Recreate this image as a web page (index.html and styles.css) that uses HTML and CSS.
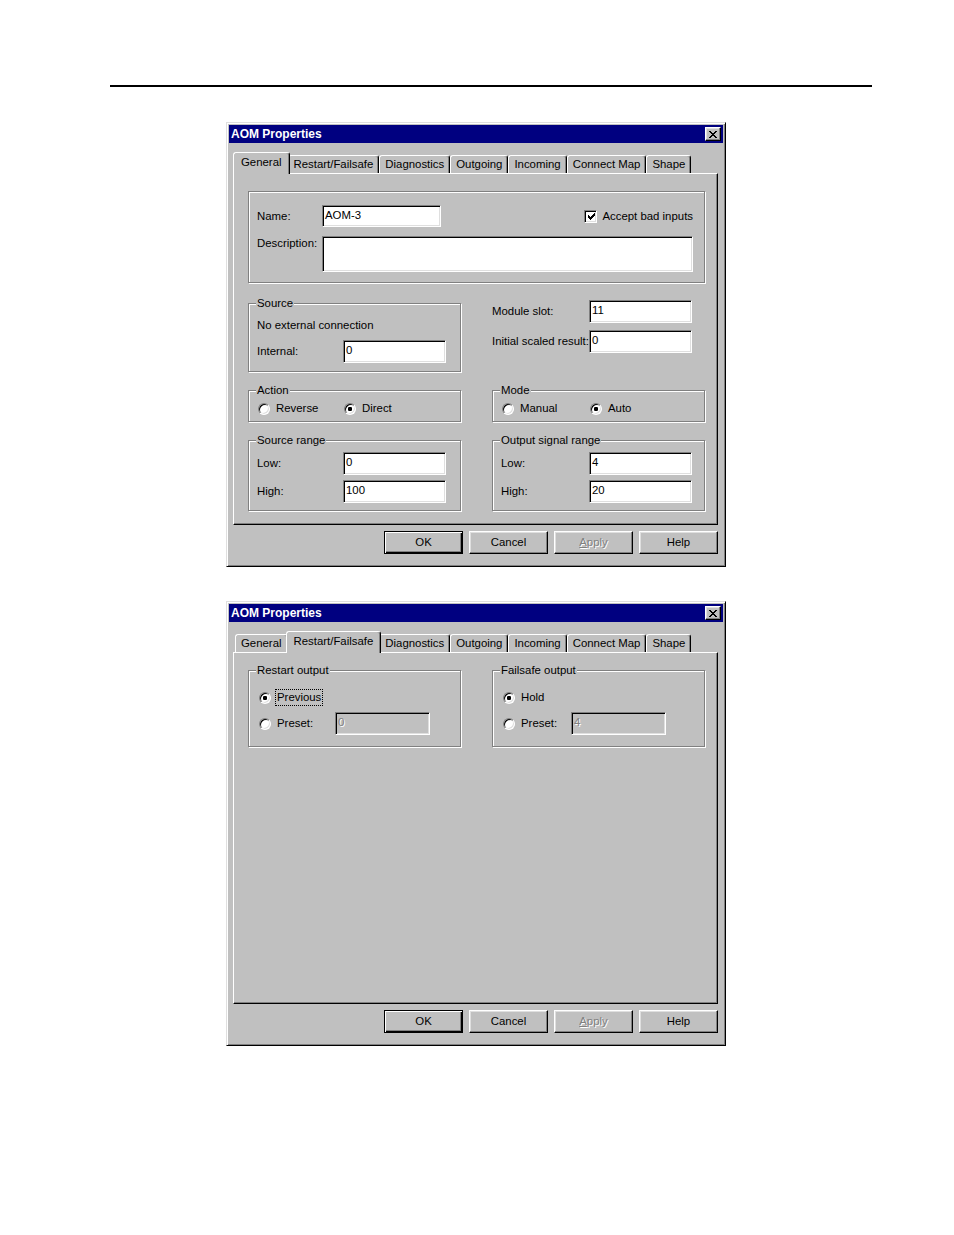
FILE: index.html
```html
<!DOCTYPE html>
<html lang="en">
<head>
<meta charset="utf-8">
<title>AOM Properties</title>
<link rel="stylesheet" href="styles.css">
</head>
<body>
<div class="page">
  <div class="rule"></div>

  <!-- Dialog 1: General tab -->
  <div class="dialog">
    <div class="titlebar">
      <span class="title">AOM Properties</span>
      <span class="close"><svg width="8" height="7" viewBox="0 0 8 7" shape-rendering="crispEdges"><path d="M0 0h2v1h-2z M6 0h2v1h-2z M1 1h2v1h-2z M5 1h2v1h-2z M2 2h4v1h-4z M3 3h2v1h-2z M2 4h4v1h-4z M1 5h2v1h-2z M5 5h2v1h-2z M0 6h2v1h-2z M6 6h2v1h-2z" fill="#000"/></svg></span>
    </div>
    <div class="body">
      <div class="tabs">
        <span class="tab tab-active">General</span>
        <span class="tab">Restart/Failsafe</span>
        <span class="tab">Diagnostics</span>
        <span class="tab">Outgoing</span>
        <span class="tab">Incoming</span>
        <span class="tab">Connect Map</span>
        <span class="tab">Shape</span>
      </div>
      <div class="panel">
        <div class="group group-main">
          <div class="field-row">
            <span class="lbl lbl-main">Name:</span>
            <span class="edit edit-name">AOM-3</span>
            <span class="check">
              <span class="checkbox"><svg width="7" height="7" viewBox="0 0 7 7" shape-rendering="crispEdges"><path d="M6 0h1v1h-1z M5 1h2v1h-2z M0 2h1v1h-1z M4 2h3v1h-3z M0 3h2v1h-2z M3 3h3v1h-3z M0 4h5v1h-5z M1 5h3v1h-3z M2 6h1v1h-1z" fill="#000"/></svg></span>
              <span>Accept bad inputs</span>
            </span>
          </div>
          <div class="field-row field-row-top">
            <span class="lbl lbl-main lbl-top">Description:</span>
            <span class="edit edit-desc"></span>
          </div>
        </div>

        <div class="cols">
          <div class="group group-src">
            <div class="group-title">Source</div>
            <div class="note">No external connection</div>
            <div class="field-row row-internal">
              <span class="lbl lbl-range">Internal:</span>
              <span class="edit edit-std">0</span>
            </div>
          </div>
          <div class="side">
            <div class="field-row">
              <span class="lbl lbl-side">Module slot:</span>
              <span class="edit edit-std">11</span>
            </div>
            <div class="field-row">
              <span class="lbl lbl-side">Initial scaled result:</span>
              <span class="edit edit-std">0</span>
            </div>
          </div>

          <div class="group group-opts">
            <div class="group-title">Action</div>
            <div class="opts">
              <span class="opt"><span class="radio"></span>Reverse</span>
              <span class="opt"><span class="radio radio-on"></span>Direct</span>
            </div>
          </div>
          <div class="group group-opts group-right">
            <div class="group-title">Mode</div>
            <div class="opts">
              <span class="opt"><span class="radio"></span>Manual</span>
              <span class="opt"><span class="radio radio-on"></span>Auto</span>
            </div>
          </div>

          <div class="group group-range">
            <div class="group-title">Source range</div>
            <div class="field-row row-first">
              <span class="lbl lbl-range">Low:</span>
              <span class="edit edit-std">0</span>
            </div>
            <div class="field-row row-next">
              <span class="lbl lbl-range">High:</span>
              <span class="edit edit-std">100</span>
            </div>
          </div>
          <div class="group group-range group-right">
            <div class="group-title">Output signal range</div>
            <div class="field-row row-first">
              <span class="lbl lbl-range">Low:</span>
              <span class="edit edit-std">4</span>
            </div>
            <div class="field-row row-next">
              <span class="lbl lbl-range">High:</span>
              <span class="edit edit-std">20</span>
            </div>
          </div>
        </div>
      </div>
      <div class="buttons">
        <span class="btn btn-default">OK</span>
        <span class="btn">Cancel</span>
        <span class="btn btn-disabled"><span><u>A</u>pply</span></span>
        <span class="btn">Help</span>
      </div>
    </div>
  </div>

  <!-- Dialog 2: Restart/Failsafe tab -->
  <div class="dialog">
    <div class="titlebar">
      <span class="title">AOM Properties</span>
      <span class="close"><svg width="8" height="7" viewBox="0 0 8 7" shape-rendering="crispEdges"><path d="M0 0h2v1h-2z M6 0h2v1h-2z M1 1h2v1h-2z M5 1h2v1h-2z M2 2h4v1h-4z M3 3h2v1h-2z M2 4h4v1h-4z M1 5h2v1h-2z M5 5h2v1h-2z M0 6h2v1h-2z M6 6h2v1h-2z" fill="#000"/></svg></span>
    </div>
    <div class="body">
      <div class="tabs">
        <span class="tab">General</span>
        <span class="tab tab-active">Restart/Failsafe</span>
        <span class="tab">Diagnostics</span>
        <span class="tab">Outgoing</span>
        <span class="tab">Incoming</span>
        <span class="tab">Connect Map</span>
        <span class="tab">Shape</span>
      </div>
      <div class="panel">
        <div class="cols">
          <div class="group group-fail group-restart">
            <div class="group-title">Restart output</div>
            <div class="fail-row fail-row-first">
              <span class="opt"><span class="radio radio-on"></span><span class="focus">Previous</span></span>
            </div>
            <div class="fail-row fail-row-next">
              <span class="opt opt-fixed"><span class="radio"></span>Preset:</span>
              <span class="edit edit-preset edit-disabled">0</span>
            </div>
          </div>
          <div class="group group-fail group-failsafe">
            <div class="group-title">Failsafe output</div>
            <div class="fail-row fail-row-first">
              <span class="opt"><span class="radio radio-on"></span><span class="plain">Hold</span></span>
            </div>
            <div class="fail-row fail-row-next">
              <span class="opt opt-fixed"><span class="radio"></span>Preset:</span>
              <span class="edit edit-preset edit-disabled">4</span>
            </div>
          </div>
        </div>
      </div>
      <div class="buttons">
        <span class="btn btn-default">OK</span>
        <span class="btn">Cancel</span>
        <span class="btn btn-disabled"><span><u>A</u>pply</span></span>
        <span class="btn">Help</span>
      </div>
    </div>
  </div>
</div>
</body>
</html>
```

FILE: styles.css
```css
* { box-sizing: border-box; }

body {
  margin: 0;
  background: #fff;
  font-family: "Liberation Sans", Arial, sans-serif;
  font-size: 11.4px;
  color: #000;
}

.page {
  padding: 85px 0 40px;
}

.rule {
  margin-left: 110px;
  width: 762px;
  height: 2px;
  background: #000;
}

/* ---------- window frame ---------- */
.dialog {
  width: 500px;
  margin: 35px 0 0 226px;
  padding: 2px;
  background: #c0c0c0;
  border: 1px solid;
  border-color: #dfdfdf #000 #000 #dfdfdf;
  box-shadow: inset 1px 1px 0 #fff, inset -1px -1px 0 #808080;
}

.dialog + .dialog {
  margin-top: 34px;
}

.titlebar {
  height: 18px;
  background: #000080;
  display: flex;
  align-items: center;
  justify-content: space-between;
  padding: 0 2px;
}

.title {
  color: #fff;
  font-weight: bold;
  font-size: 12px;
  line-height: 18px;
  white-space: nowrap;
}

.close {
  width: 16px;
  height: 14px;
  background: #c0c0c0;
  border: 1px solid;
  border-color: #fff #000 #000 #fff;
  box-shadow: inset -1px -1px 0 #808080, inset 1px 1px 0 #dfdfdf;
  display: flex;
  align-items: center;
  justify-content: center;
}

.close svg { display: block; }

.body {
  padding: 9px 5px 10px 4px;
}

/* ---------- tabs ---------- */
.tabs {
  display: flex;
  align-items: flex-end;
  height: 21px;
  padding-left: 2px;
}

.tab {
  height: 18px;
  line-height: 16px;
  padding: 0 5px;
  border: 1px solid;
  border-bottom: 0;
  border-color: #fff #000 transparent #fff;
  border-radius: 3px 3px 0 0;
  box-shadow: inset -1px 0 0 #808080;
  white-space: nowrap;
  background: #c0c0c0;
}

.tab-active {
  height: 22px;
  line-height: 18px;
  margin: 0 -2px -1px;
  padding: 0 7px 2px;
  z-index: 1;
}

.panel {
  height: 352px;
  border: 1px solid;
  border-color: #fff #000 #000 #fff;
  box-shadow: inset -1px -1px 0 #808080;
  padding: 17px 12px 0 14px;
}

/* ---------- group boxes ---------- */
.group {
  border: 1px solid #808080;
  box-shadow: inset 1px 1px 0 #fff, 1px 1px 0 #fff;
}

.group-title {
  width: max-content;
  margin: -7px 0 0 -1px;
  padding: 0 1px;
  line-height: 13px;
  background: #c0c0c0;
  white-space: nowrap;
}

.group-main {
  padding: 13px 11px 10px 8px;
  display: flex;
  flex-direction: column;
  gap: 9px;
}

.field-row {
  display: flex;
  align-items: center;
  line-height: 13px;
}

.field-row-top {
  align-items: flex-start;
}

.lbl { white-space: nowrap; }
.lbl-main { width: 65px; flex: none; }
.lbl-top { padding-top: 1px; }
.lbl-range { width: 86px; flex: none; }
.group-right .lbl-range { width: 88px; }
.lbl-side { width: 97px; flex: none; }

.check {
  margin-left: auto;
  display: flex;
  align-items: center;
  gap: 5px;
  white-space: nowrap;
}

.checkbox {
  width: 13px;
  height: 13px;
  background: #fff;
  border: 1px solid;
  border-color: #808080 #fff #fff #808080;
  box-shadow: inset 1px 1px 0 #000, inset -1px -1px 0 #dfdfdf;
  display: flex;
  align-items: center;
  justify-content: center;
  padding: 1px 0 0 1px;
}

.checkbox svg { display: block; }

/* ---------- edit fields ---------- */
.edit {
  display: block;
  flex: none;
  height: 23px;
  background: #fff;
  border: 1px solid;
  border-color: #808080 #fff #fff #808080;
  box-shadow: inset 1px 1px 0 #000, inset -1px -1px 0 #dfdfdf;
  padding: 3px 2px 0;
  line-height: 13px;
  white-space: nowrap;
  overflow: hidden;
}

.edit-name { width: 119px; height: 22px; padding-top: 3px; }
.edit-desc { width: 371px; height: 36px; }
.edit-std { width: 103px; }
.edit-preset { width: 95px; }

.edit-disabled {
  background: #c0c0c0;
  color: #808080;
  text-shadow: 1px 1px 0 #fff;
}

/* ---------- columns ---------- */
.cols {
  display: grid;
  grid-template-columns: 213px 213px;
  column-gap: 31px;
  row-gap: 18px;
  margin-top: 20px;
  align-items: start;
}

.panel > .cols:first-child { margin-top: 0; }

.group-src {
  padding: 0 8px 8px 8px;
}

.note {
  margin-top: 9px;
  line-height: 13px;
  white-space: nowrap;
}

.row-internal { margin-top: 8px; }

.side {
  margin-top: -3px;
  display: flex;
  flex-direction: column;
  gap: 7px;
}

.group-opts {
  padding: 0 8px 6px 9px;
}

.group-opts .group-title { margin-left: -2px; }

.opts {
  display: grid;
  grid-template-columns: 86px auto;
  margin-top: 5px;
}

.group-right .opts { grid-template-columns: 88px auto; }

.opt {
  display: flex;
  align-items: center;
  gap: 6px;
  line-height: 13px;
  white-space: nowrap;
}

.radio {
  width: 12px;
  height: 12px;
  flex: none;
  border-radius: 50%;
  background: #fff;
  border: 1px solid;
  border-color: #808080 #fff #fff #808080;
  box-shadow: inset 1px 1px 0 #000, inset -1px -1px 0 #dfdfdf;
}

.radio-on {
  background: radial-gradient(circle at center, #000 0 2px, #fff 2.4px);
}

.group-range {
  padding: 0 8px 7px 8px;
}

.row-first { margin-top: 5px; }
.row-next { margin-top: 5px; }

/* ---------- restart / failsafe ---------- */
.group-fail {
  padding: 0 8px 11px 10px;
}

.group-fail .group-title { margin-left: -3px; }

.fail-row {
  display: flex;
  align-items: center;
  line-height: 13px;
}

.fail-row-first { margin-top: 12px; height: 17px; }
.fail-row-next { margin-top: 6px; }

.focus {
  border: 1px dotted #000;
  padding: 1px 1px;
  margin-left: -2px;
}

.plain {
  padding: 2px 0;
}

.group-restart .opt-fixed { width: 76px; flex: none; }
.group-failsafe .opt-fixed { width: 68px; flex: none; }

/* ---------- buttons ---------- */
.buttons {
  display: flex;
  justify-content: flex-end;
  gap: 6px;
  margin-top: 6px;
}

.btn {
  width: 79px;
  height: 23px;
  border: 1px solid;
  border-color: #fff #000 #000 #fff;
  box-shadow: inset -1px -1px 0 #808080, inset 1px 1px 0 #dfdfdf;
  display: flex;
  align-items: center;
  justify-content: center;
  line-height: 13px;
}

.btn-default {
  border-color: #000;
  box-shadow: inset 1px 1px 0 #fff, inset -1px -1px 0 #000, inset -2px -2px 0 #808080;
}

.btn-disabled {
  color: #808080;
  text-shadow: 1px 1px 0 #fff;
}
```
